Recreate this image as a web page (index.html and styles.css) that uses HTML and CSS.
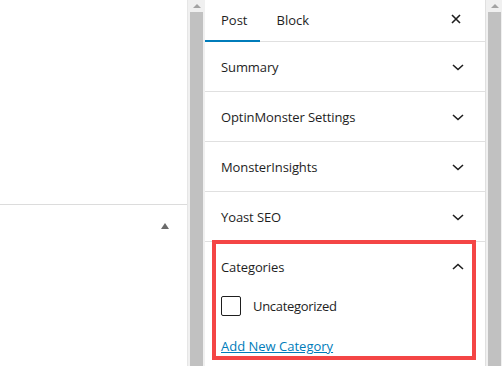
FILE: index.html
```html
<!DOCTYPE html>
<html lang="en">
<head>
  <meta charset="UTF-8">
  <title>Post settings</title>
  <link rel="stylesheet" href="styles.css">
</head>
<body>
  <div class="editor">
    <div class="canvas">
      <div class="canvas-top"></div>
      <div class="meta-row">
        <span class="meta-toggle"></span>
      </div>
    </div>

    <div class="scrollbar">
      <span class="scroll-up"></span>
      <div class="scroll-thumb"></div>
    </div>

    <div class="sidebar">
      <div class="sidebar-header">
        <button class="tab active">Post</button>
        <button class="tab">Block</button>
        <button class="close" aria-label="Close">
          <svg width="24" height="24" viewBox="0 0 24 24"><path d="M8 8l8 8M16 8l-8 8" stroke="#1e1e1e" stroke-width="1.6" fill="none"/></svg>
        </button>
      </div>

      <div class="panel">
        <span class="panel-title">Summary</span>
        <svg class="chevron" width="24" height="24" viewBox="0 0 24 24"><path d="M7 10l5 4.5 5-4.5" stroke="#1e1e1e" stroke-width="1.6" fill="none"/></svg>
      </div>
      <div class="panel">
        <span class="panel-title">OptinMonster Settings</span>
        <svg class="chevron" width="24" height="24" viewBox="0 0 24 24"><path d="M7 10l5 4.5 5-4.5" stroke="#1e1e1e" stroke-width="1.6" fill="none"/></svg>
      </div>
      <div class="panel">
        <span class="panel-title">MonsterInsights</span>
        <svg class="chevron" width="24" height="24" viewBox="0 0 24 24"><path d="M7 10l5 4.5 5-4.5" stroke="#1e1e1e" stroke-width="1.6" fill="none"/></svg>
      </div>
      <div class="panel">
        <span class="panel-title">Yoast SEO</span>
        <svg class="chevron" width="24" height="24" viewBox="0 0 24 24"><path d="M7 10l5 4.5 5-4.5" stroke="#1e1e1e" stroke-width="1.6" fill="none"/></svg>
      </div>

      <div class="panel-open">
        <div class="panel open-head">
          <span class="panel-title">Categories</span>
          <svg class="chevron" width="24" height="24" viewBox="0 0 24 24"><path d="M7 14l5-4.5 5 4.5" stroke="#1e1e1e" stroke-width="1.6" fill="none"/></svg>
        </div>
        <label class="check-row">
          <span class="checkbox"></span>
          <span class="check-label">Uncategorized</span>
        </label>
        <a class="add-link" href="#">Add New Category</a>
        <div class="highlight"></div>
      </div>
    </div>

    <div class="scrollbar right">
      <span class="scroll-up"></span>
      <div class="scroll-thumb"></div>
    </div>
  </div>
</body>
</html>
```

FILE: styles.css
```css
body {
  margin: 0;
  font-family: "Open Sans", "Noto Sans", sans-serif;
  font-size: 13px;
  color: #1e1e1e;
  background: #fff;
}
.editor {
  display: flex;
  height: 366px;
  overflow: hidden;
}
.canvas {
  width: 187px;
  flex-shrink: 0;
}
.canvas-top {
  height: 204px;
  border-bottom: 1px solid #dcdcdc;
}
.meta-row {
  display: flex;
  justify-content: flex-end;
  padding: 18px 18px 0 0;
}
.meta-toggle {
  width: 0;
  height: 0;
  border-left: 4px solid transparent;
  border-right: 4px solid transparent;
  border-bottom: 6px solid #6b6b6b;
}
.scrollbar {
  width: 18px;
  flex-shrink: 0;
  background: #f0f0f0;
  display: flex;
  flex-direction: column;
  align-items: center;
  border-left: 1px solid #e6e6e6;
  box-sizing: border-box;
}
.scrollbar.right {
  width: 17px;
  border-left: none;
}
.scroll-up {
  margin-top: 4px;
  width: 0;
  height: 0;
  border-left: 4px solid transparent;
  border-right: 4px solid transparent;
  border-bottom: 4px solid #a3a3a3;
}
.scroll-thumb {
  margin-top: 4px;
  width: 13px;
  flex: 1;
  background: #c1c1c1;
}
.sidebar {
  width: 280px;
  flex-shrink: 0;
  border-right: 1px solid #e0e0e0;
}
.sidebar-header {
  display: flex;
  align-items: stretch;
  height: 41px;
  border-bottom: 1px solid #e0e0e0;
}
.tab {
  font: inherit;
  color: #1e1e1e;
  background: none;
  border: none;
  padding: 0 13px 3px 16px;
  height: 42px;
  cursor: pointer;
}
.tab.active {
  box-shadow: inset 0 -2px 0 #007cba;
}
.close {
  margin-left: auto;
  margin-right: 17px;
  background: none;
  border: none;
  padding: 0 0 3px;
  display: flex;
  align-items: center;
}
.panel {
  display: flex;
  align-items: center;
  justify-content: space-between;
  height: 49px;
  padding: 0 15px 0 16px;
  border-bottom: 1px solid #e0e0e0;
}
.panel-title {
  font-weight: 500;
  letter-spacing: -0.1px;
}
.panel-open {
  position: relative;
  padding-bottom: 10px;
}
.open-head {
  border-bottom: none;
}
.check-row {
  display: flex;
  align-items: center;
  gap: 12px;
  padding: 5px 16px 0;
}
.checkbox {
  width: 18px;
  height: 18px;
  border: 1px solid #1e1e1e;
  border-radius: 2px;
}
.check-label {
  letter-spacing: -0.3px;
}
.add-link {
  display: block;
  margin: 21px 16px 0;
  color: #007cba;
}
.highlight {
  position: absolute;
  left: 7px;
  right: 9px;
  top: -2px;
  height: 120px;
  border: 4px solid #f44545;
  box-sizing: border-box;
}
```
